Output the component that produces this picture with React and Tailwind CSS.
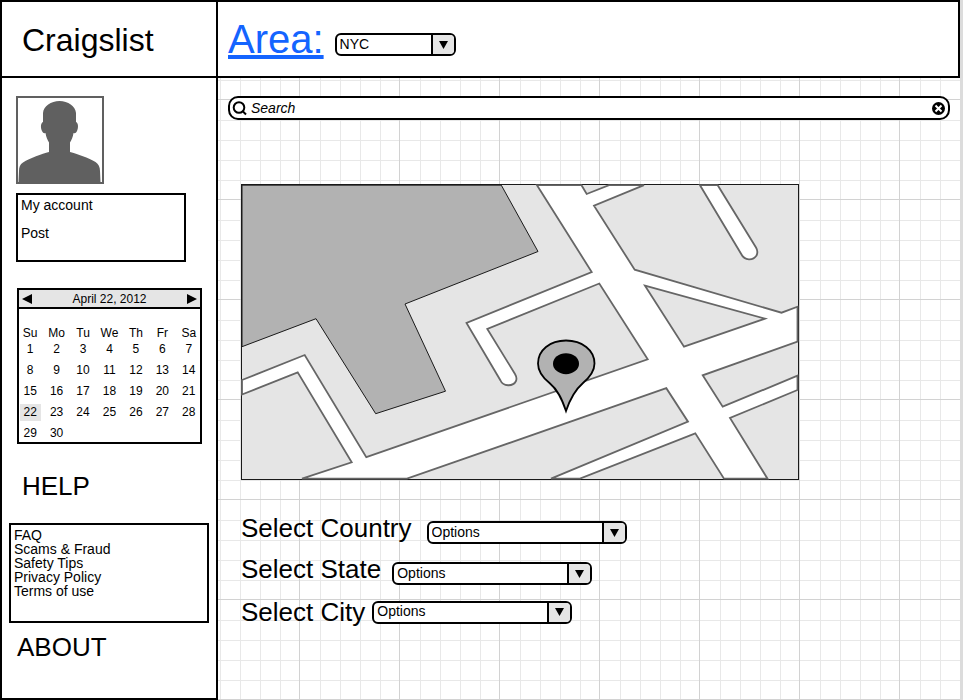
import React from "react";

const WEEKDAYS = ["Su", "Mo", "Tu", "We", "Th", "Fr", "Sa"];
const WEEKS = [
  [1, 2, 3, 4, 5, 6, 7],
  [8, 9, 10, 11, 12, 13, 14],
  [15, 16, 17, 18, 19, 20, 21],
  [22, 23, 24, 25, 26, 27, 28],
  [29, 30, null, null, null, null, null],
];
const SELECTED_DAY = 22;
const HELP_LINKS = ["FAQ", "Scams & Fraud", "Safety Tips", "Privacy Policy", "Terms of use"];

function Dropdown({ id, value, width }) {
  return (
    <div className={`relative h-[23px] ${width}`}>
      <select
        id={id}
        defaultValue={value}
        className="block h-full w-full appearance-none rounded-md border-2 border-black bg-white pr-6 pb-0.5 pl-[3px] text-[14px] leading-4 text-black"
      >
        <option>{value}</option>
      </select>
      <span className="pointer-events-none absolute inset-y-0.5 right-0.5 flex w-[23px] items-center justify-center rounded-r border-l-2 border-black bg-[#e5e5e5]">
        <svg width="9" height="8" viewBox="0 0 9 8" aria-hidden="true">
          <path d="M0 0H9L4.5 8Z" />
        </svg>
      </span>
    </div>
  );
}

function Avatar() {
  return (
    <svg
      viewBox="0 0 88 88"
      className="block size-[88px] bg-white"
      role="img"
      aria-label="Profile picture"
    >
      <rect x="1" y="1" width="86" height="86" fill="#fff" stroke="#606060" strokeWidth="2" />
      <path
        fill="#606060"
        d="M43.5 5C52 5 59.5 10 60 17L60 26C62.5 27 62.5 32 61 35C60 37 59 37.500 57.500 37C57 41 55.500 44 54 46.500V56C61 58 73 62 79.500 66C82.500 68 84 71 84 75L84.500 86H2.500L3 75C3 71 4 68.500 7 66.500C14 62 26 58 33 56V46.500C31.500 44 30 41 29.500 37C28 37.500 27 37 26 35C24.500 32 24.500 27 27 26L27 17C27.500 10 35 5 43.500 5Z"
      />
    </svg>
  );
}

function Calendar() {
  return (
    <div className="h-[156px] w-[185px] border-2 border-black bg-white text-[12px]">
      <div className="flex h-[19px] items-center justify-between border-b-2 border-black bg-[#e5e5e5] px-[3px]">
        <button type="button" aria-label="Previous month">
          <svg width="10" height="10" viewBox="0 0 10 10" className="block">
            <path d="M10 0V10L0 5Z" />
          </svg>
        </button>
        <span className="leading-[14px]">April 22, 2012</span>
        <button type="button" aria-label="Next month">
          <svg width="10" height="10" viewBox="0 0 10 10" className="block">
            <path d="M0 0V10L10 5Z" />
          </svg>
        </button>
      </div>
      <div className="-mx-0.5 pt-[18px]">
        <table className="w-full table-fixed border-collapse text-center">
          <thead>
            <tr className="h-3">
              {WEEKDAYS.map((day) => (
                <th key={day} className="p-0 leading-3 font-normal">
                  {day}
                </th>
              ))}
            </tr>
          </thead>
          <tbody>
            {WEEKS.map((week, i) => (
              <tr key={i} className="h-[21px]">
                {week.map((day, j) => (
                  <td key={j} className="p-0 leading-[17px]">
                    <span
                      className={
                        day === SELECTED_DAY
                          ? "mx-auto block w-[21px] bg-[#e5e5e5]"
                          : "mx-auto block w-[21px]"
                      }
                    >
                      {day}
                    </span>
                  </td>
                ))}
              </tr>
            ))}
          </tbody>
        </table>
      </div>
    </div>
  );
}

function StreetMap() {
  return (
    <svg
      viewBox="241 184 558 296"
      className="block h-auto w-full max-w-[558px]"
      role="img"
      aria-label="Street map"
    >
      <rect x="241.500" y="184.500" width="557" height="295" fill="#e5e5e5" stroke="#1a1a1a" />
      <g fill="#fff" stroke="#666" strokeWidth="1.800">
        <path
          fillRule="evenodd"
          d="M537 185.200L591.700 272L466.500 323L500.500 380.500C503 386.500 513 387 516 381C517 378.500 516.500 376.500 515 374L487.300 329L599.300 283.500L647.700 359.300L366.300 457.200L304.700 355L242 380V394.500L297.700 372.300L351.700 462.300L302 478.700H407L666.300 388.200L688 421.700L551 478.700H580L695.300 433.300L724 478.700H767.500L730 418L797.500 390V375.700L722.700 406.700L702.700 375.300L797.500 341.700V306.700L781.500 312.700L634.700 269.700L594 205.700L644 185.200H609L586.700 194L581.500 185.200ZM645 285.700L765 318.700L684 346.700Z"
        />
        <path d="M700 185.200L741.500 254.500C744.500 260.500 753 261 756.500 255.500C758 252.500 757.500 250 756 247.500L717.700 185.200Z" />
      </g>
      <path
        d="M242 185.200H501.300L538 251.500L405 304L445.500 391.200L375.700 413.700L316 318.700L242 346.700Z"
        fill="#b2b2b2"
        stroke="#1a1a1a"
      />
      <path
        d="M566 340.500C582 340.500 594.500 350 594.500 363.500C594.500 371 590 377 583 383C575 390 570 399 566 411C562 399 558 390 549.500 383C542 377 538 371 538 363.500C538 350 550 340.500 566 340.500Z"
        fill="#b2b2b2"
        stroke="#000"
        strokeWidth="1.800"
      />
      <ellipse cx="566" cy="363.700" rx="13" ry="10.500" />
    </svg>
  );
}

export default function App() {
  return (
    <div className="flex min-h-screen border-r-[3px] border-[#dcdcdc] bg-white font-['Liberation_Sans',Arial,sans-serif] text-black">
      <aside className="w-[218px] shrink-0 border-2 border-black bg-white">
        <div className="flex h-[76px] items-center border-b-2 border-black pt-0.5 pl-5">
          <h1 className="text-[32px] leading-9">Craigslist</h1>
        </div>
        <div className="flex flex-col items-start pt-[18px] pl-[7px]">
          <div className="flex flex-col gap-[9px] pl-[7px]">
            <Avatar />
            <nav
              aria-label="Account"
              className="flex h-[69px] w-[170px] flex-col gap-3 border-2 border-black pt-0.5 pl-[3px] text-[14px] leading-4"
            >
              <a href="#account">My account</a>
              <a href="#post">Post</a>
            </nav>
          </div>
          <div className="mt-[26px] pl-2">
            <Calendar />
          </div>
          <h2 className="mt-[27px] pl-[13px] text-[26px] leading-[30px]">HELP</h2>
          <nav
            aria-label="Help"
            className="mt-[22px] flex h-[100px] w-[200px] flex-col border-2 border-black pt-[3px] pl-[3px] text-[14px] leading-[14px]"
          >
            {HELP_LINKS.map((label) => (
              <a key={label} href="#help">
                {label}
              </a>
            ))}
          </nav>
          <h2 className="mt-[9px] pl-2 text-[26px] leading-[30px]">ABOUT</h2>
        </div>
      </aside>

      <div className="flex min-w-0 flex-1 flex-col">
        <header className="flex h-[78px] items-center gap-[11px] border-y-2 border-r-2 border-black bg-white pl-[10px]">
          <a
            href="#area"
            className="text-[40px] leading-[46px] text-[#1464ff] underline decoration-4 underline-offset-2"
          >
            Area:
          </a>
          <div className="pt-[11px]">
            <label htmlFor="area" className="sr-only">
              Area
            </label>
            <Dropdown id="area" value="NYC" width="w-[121px]" />
          </div>
        </header>

        <main className="flex-1 bg-[linear-gradient(to_right,transparent_99px,#d2d2d2_99px),linear-gradient(to_bottom,transparent_99px,#d2d2d2_99px),linear-gradient(to_right,transparent_20px,#e8e8e8_20px,#e8e8e8_21px,transparent_21px,transparent_40px,#e8e8e8_40px,#e8e8e8_41px,transparent_41px,transparent_60px,#e8e8e8_60px,#e8e8e8_61px,transparent_61px,transparent_80px,#e8e8e8_80px,#e8e8e8_81px,transparent_81px),linear-gradient(to_bottom,transparent_20px,#e8e8e8_20px,#e8e8e8_21px,transparent_21px,transparent_40px,#e8e8e8_40px,#e8e8e8_41px,transparent_41px,transparent_60px,#e8e8e8_60px,#e8e8e8_61px,transparent_61px,transparent_80px,#e8e8e8_80px,#e8e8e8_81px,transparent_81px)] bg-[size:100px_100px] bg-[position:-18px_-78px] px-[10px] pt-[18px]">
          <form
            role="search"
            className="flex h-6 items-center rounded-[10px] border-2 border-black bg-white pr-[3px] pl-[2px]"
          >
            <svg
              width="15"
              height="15"
              viewBox="0 0 15 15"
              className="shrink-0"
              fill="none"
              stroke="#000"
              strokeWidth="2"
              aria-hidden="true"
            >
              <circle cx="7" cy="6.500" r="5.300" />
              <path d="M10.500 10L14 13.500" />
            </svg>
            <input
              type="text"
              aria-label="Search"
              placeholder="Search"
              className="min-w-0 flex-1 bg-transparent pl-1 text-[14px] leading-5 italic outline-none placeholder:text-black"
            />
            <button type="button" aria-label="Clear search" className="shrink-0">
              <svg width="13" height="13" viewBox="0 0 13 13" className="block">
                <circle cx="6.500" cy="6.500" r="6.500" />
                <path d="M3.500 3.500L9.500 9.500M9.500 3.500L3.500 9.500" stroke="#fff" strokeWidth="2" />
              </svg>
            </button>
          </form>

          <div className="pt-16 pl-[13px]">
            <StreetMap />
            <div className="flex flex-col gap-[10px] pt-[33px] text-[26px] leading-[30px]">
              <div className="flex h-[31px] gap-[15px]">
                <label htmlFor="country">Select Country</label>
                <div className="self-end">
                  <Dropdown id="country" value="Options" width="w-[200px]" />
                </div>
              </div>
              <div className="flex h-[31px] gap-[11px]">
                <label htmlFor="state">Select State</label>
                <div className="self-end">
                  <Dropdown id="state" value="Options" width="w-[200px]" />
                </div>
              </div>
              <div className="flex h-[34px] items-center gap-[7px]">
                <label htmlFor="city">Select City</label>
                <Dropdown id="city" value="Options" width="w-[200px]" />
              </div>
            </div>
          </div>
        </main>
      </div>
    </div>
  );
}
